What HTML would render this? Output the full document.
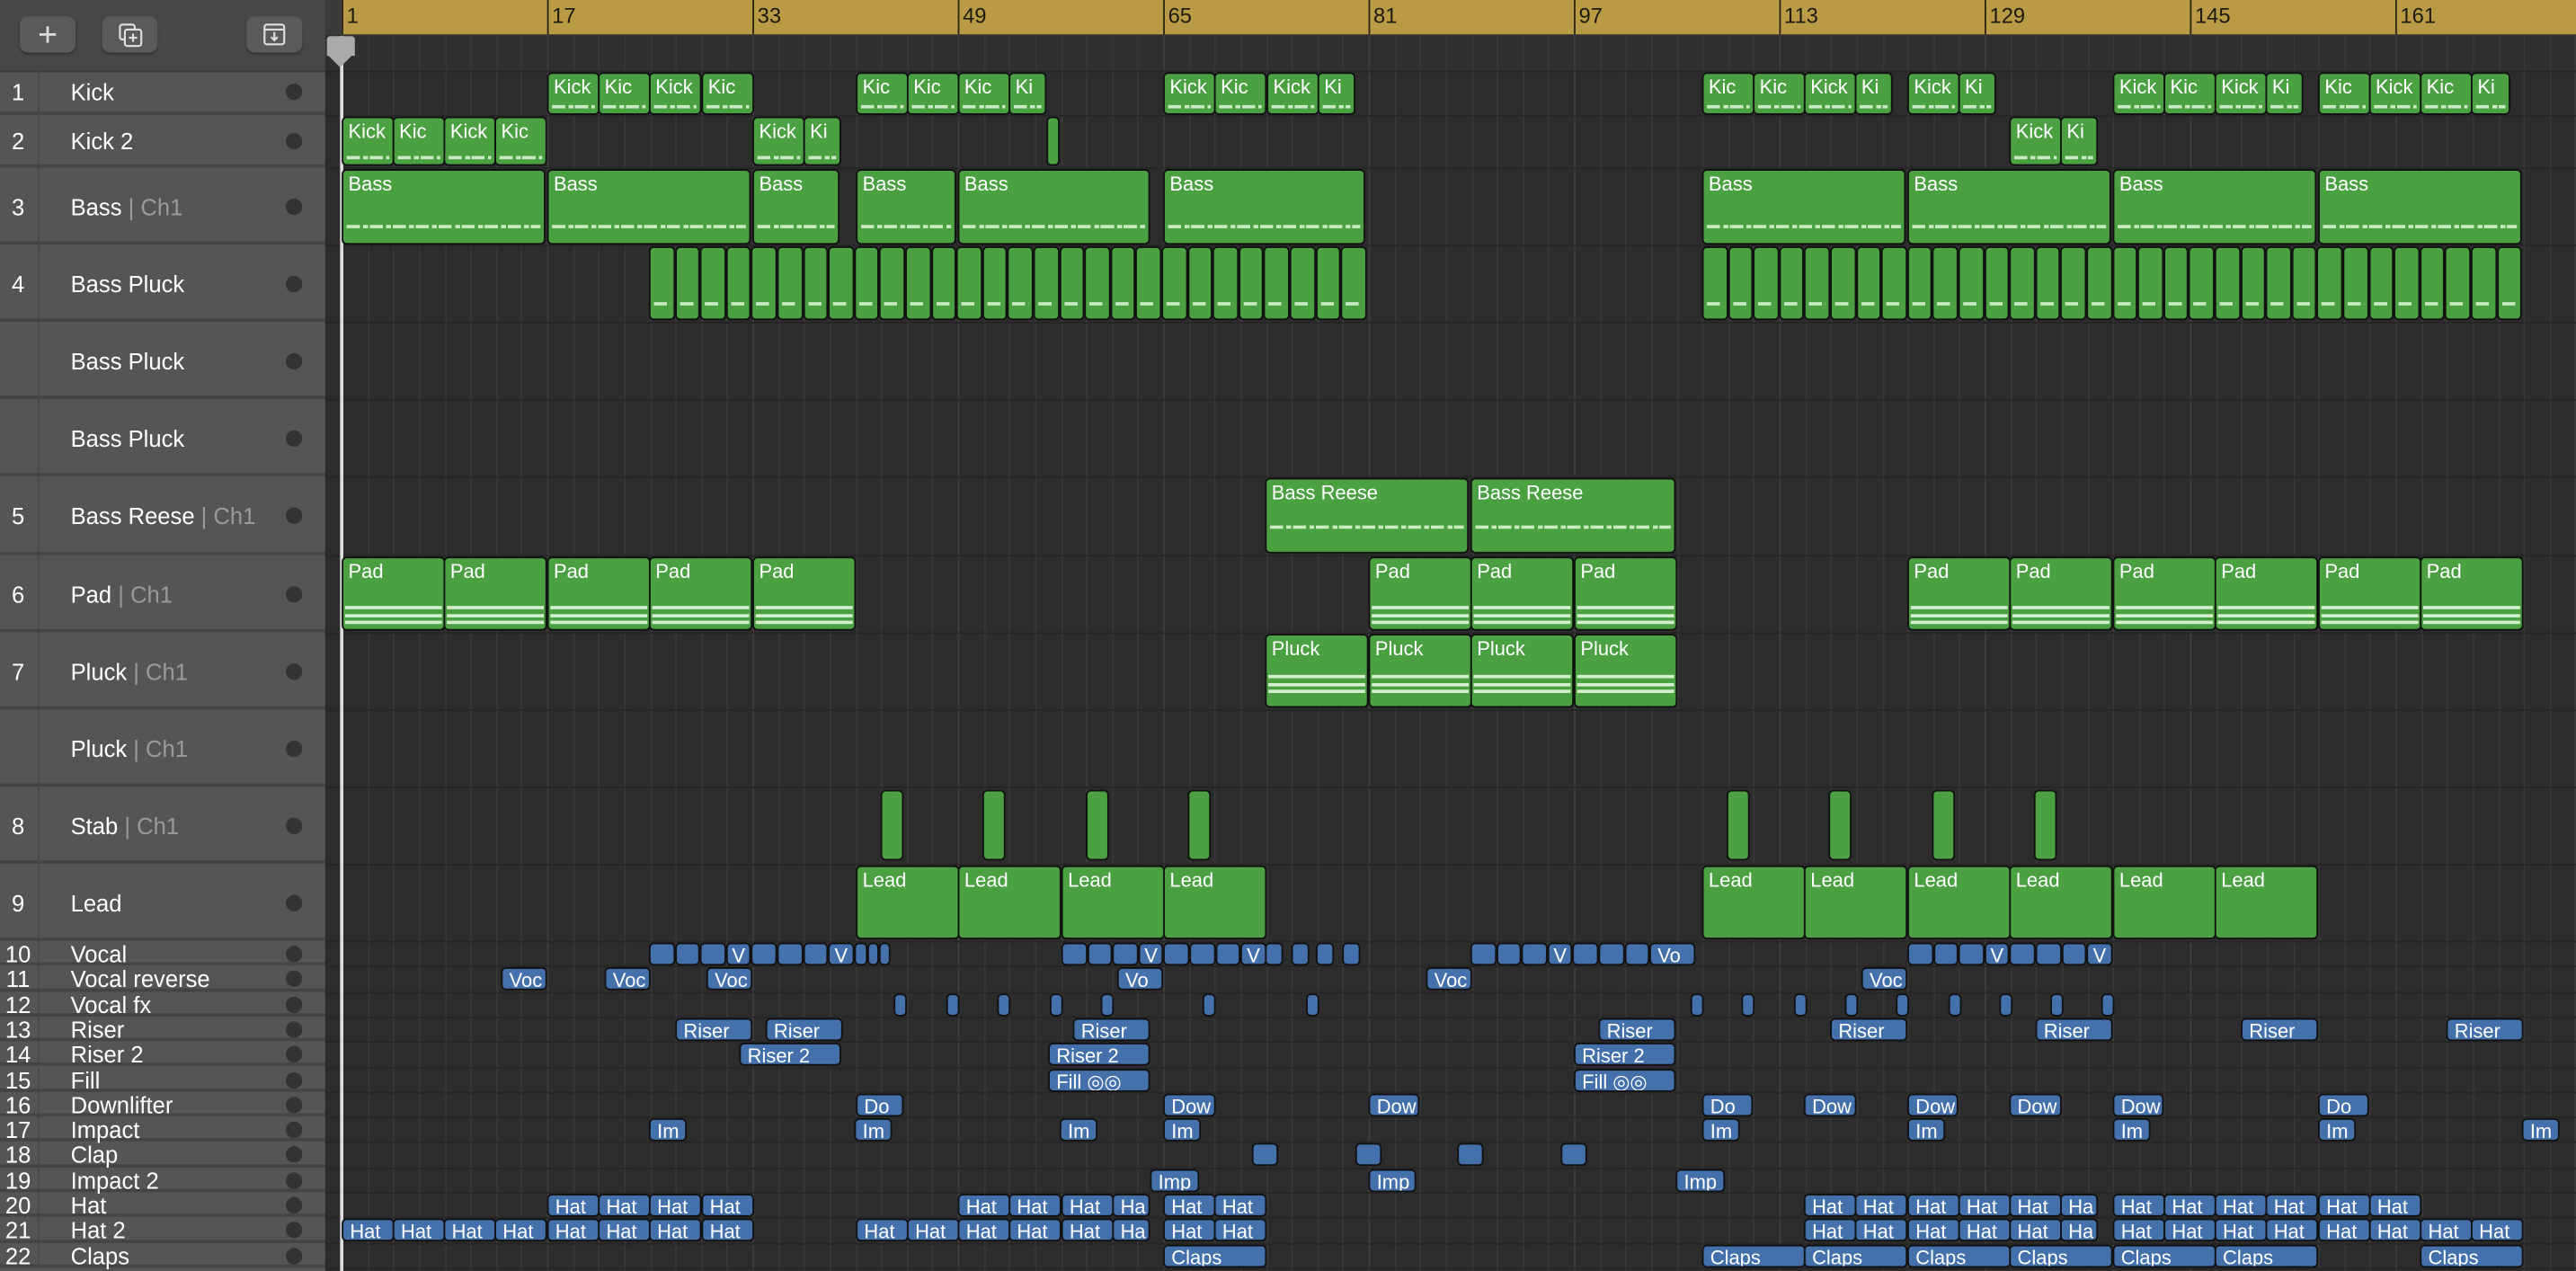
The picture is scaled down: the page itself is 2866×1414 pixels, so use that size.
<!DOCTYPE html>
<html><head><meta charset="utf-8">
<style>
html,body{margin:0;padding:0;background:#2c2c2c;overflow:hidden}
body{width:2866px;height:1414px}
#s{position:absolute;left:0;top:0;width:1568px;height:774px;transform-origin:0 0;transform:scale(1.82781,1.82687);font-family:"Liberation Sans",sans-serif;background:#2c2c2c;overflow:hidden}
#list{position:absolute;left:0;top:0;width:198px;height:774px;background:#555}
#hdr{position:absolute;left:0;top:0;width:198px;height:43px;background:#474747;border-bottom:1px solid #3a3a3a}
.btn{position:absolute;top:10px;height:22px;background:#5a5a5a;border-radius:5px;box-shadow:0 1px 1px #333}
.row{position:absolute;left:0;width:198px;border-bottom:2px solid #444;box-sizing:border-box;color:#fff}
.row .n{position:absolute;left:0;width:22px;text-align:center;font-size:14px}
.row .nm{position:absolute;left:43px;font-size:14px;white-space:nowrap}
.row .d{position:absolute;left:174px;width:10px;height:10px;border-radius:50%;background:#333}
.row .sep{position:absolute;left:23px;top:0;bottom:0;width:1px;background:#484848}
.g{color:#9a9a9a}
#tl{position:absolute;left:198px;top:0;right:0;bottom:0;background:#2c2c2c}
.r{position:absolute;box-sizing:border-box;border:1px solid #111;border-radius:3px;color:#fff;font-size:12px;line-height:13px;padding:2px 0 0 3px;overflow:hidden;white-space:nowrap}
.gr{background:#4ba142}
.bl{background:#4470ab;padding:1px 0 0 4px;font-size:12px}
.ln{position:absolute;left:2px;right:2px;height:2px;background:repeating-linear-gradient(90deg,#c8ebc2 0 8px,transparent 8px 10px,#c8ebc2 10px 13px,transparent 13px 14px)}
.sl{position:absolute;left:1px;right:1px;height:2px;background:#d4f0cf}
</style></head><body>
<div id="s">
<div id="tl"></div>
<div id="list">
<div id="hdr">
<div class="btn" style="left:12px;width:34px"><svg width="34" height="22"><path d="M17 6v10M12 11h10" stroke="#ddd" stroke-width="1.5"/></svg></div>
<div class="btn" style="left:62px;width:34px"><svg width="34" height="22"><rect x="11" y="5" width="9" height="9" rx="1.5" fill="none" stroke="#ddd" stroke-width="1.2"/><rect x="14" y="8" width="10" height="10" rx="1.5" fill="#5a5a5a" stroke="#ddd" stroke-width="1.2"/><path d="M19 10.5v5M16.5 13h5" stroke="#ddd" stroke-width="1.2"/></svg></div>
<div class="btn" style="left:150px;width:34px"><svg width="34" height="22"><rect x="11" y="5" width="12" height="12" rx="1.5" fill="none" stroke="#ddd" stroke-width="1.2"/><path d="M11 8h12M17 9.5v5M15 12.5l2 2 2-2" fill="none" stroke="#ddd" stroke-width="1.2"/></svg></div>
</div>
<div class="row" style="top:43px;height:27px"><span class="sep"></span><span class="n" style="top:5px">1</span><span class="nm" style="top:5px">Kick</span><span class="d" style="top:8px"></span></div>
<div class="row" style="top:70px;height:32px"><span class="sep"></span><span class="n" style="top:8px">2</span><span class="nm" style="top:8px">Kick 2</span><span class="d" style="top:11px"></span></div>
<div class="row" style="top:102px;height:47px"><span class="sep"></span><span class="n" style="top:16px">3</span><span class="nm" style="top:16px">Bass <span class="g">| Ch1</span></span><span class="d" style="top:19px"></span></div>
<div class="row" style="top:149px;height:47px"><span class="sep"></span><span class="n" style="top:16px">4</span><span class="nm" style="top:16px">Bass Pluck</span><span class="d" style="top:19px"></span></div>
<div class="row" style="top:196px;height:47px"><span class="sep"></span><span class="nm" style="top:16px">Bass Pluck</span><span class="d" style="top:19px"></span></div>
<div class="row" style="top:243px;height:47px"><span class="sep"></span><span class="nm" style="top:16px">Bass Pluck</span><span class="d" style="top:19px"></span></div>
<div class="row" style="top:290px;height:48px"><span class="sep"></span><span class="n" style="top:16px">5</span><span class="nm" style="top:16px">Bass Reese <span class="g">| Ch1</span></span><span class="d" style="top:19px"></span></div>
<div class="row" style="top:338px;height:47px"><span class="sep"></span><span class="n" style="top:16px">6</span><span class="nm" style="top:16px">Pad <span class="g">| Ch1</span></span><span class="d" style="top:19px"></span></div>
<div class="row" style="top:385px;height:47px"><span class="sep"></span><span class="n" style="top:16px">7</span><span class="nm" style="top:16px">Pluck <span class="g">| Ch1</span></span><span class="d" style="top:19px"></span></div>
<div class="row" style="top:432px;height:47px"><span class="sep"></span><span class="nm" style="top:16px">Pluck <span class="g">| Ch1</span></span><span class="d" style="top:19px"></span></div>
<div class="row" style="top:479px;height:47px"><span class="sep"></span><span class="n" style="top:16px">8</span><span class="nm" style="top:16px">Stab <span class="g">| Ch1</span></span><span class="d" style="top:19px"></span></div>
<div class="row" style="top:526px;height:47px"><span class="sep"></span><span class="n" style="top:16px">9</span><span class="nm" style="top:16px">Lead</span><span class="d" style="top:19px"></span></div>
<div class="row" style="top:573.0px;height:15.3px"><span class="sep"></span><span class="n" style="top:0px">10</span><span class="nm" style="top:0px">Vocal</span><span class="d" style="top:3px"></span></div>
<div class="row" style="top:588.3px;height:15.3px"><span class="sep"></span><span class="n" style="top:0px">11</span><span class="nm" style="top:0px">Vocal reverse</span><span class="d" style="top:3px"></span></div>
<div class="row" style="top:603.6px;height:15.3px"><span class="sep"></span><span class="n" style="top:0px">12</span><span class="nm" style="top:0px">Vocal fx</span><span class="d" style="top:3px"></span></div>
<div class="row" style="top:618.9px;height:15.3px"><span class="sep"></span><span class="n" style="top:0px">13</span><span class="nm" style="top:0px">Riser</span><span class="d" style="top:3px"></span></div>
<div class="row" style="top:634.2px;height:15.3px"><span class="sep"></span><span class="n" style="top:0px">14</span><span class="nm" style="top:0px">Riser 2</span><span class="d" style="top:3px"></span></div>
<div class="row" style="top:649.5px;height:15.3px"><span class="sep"></span><span class="n" style="top:0px">15</span><span class="nm" style="top:0px">Fill</span><span class="d" style="top:3px"></span></div>
<div class="row" style="top:664.8px;height:15.3px"><span class="sep"></span><span class="n" style="top:0px">16</span><span class="nm" style="top:0px">Downlifter</span><span class="d" style="top:3px"></span></div>
<div class="row" style="top:680.1px;height:15.3px"><span class="sep"></span><span class="n" style="top:0px">17</span><span class="nm" style="top:0px">Impact</span><span class="d" style="top:3px"></span></div>
<div class="row" style="top:695.4px;height:15.3px"><span class="sep"></span><span class="n" style="top:0px">18</span><span class="nm" style="top:0px">Clap</span><span class="d" style="top:3px"></span></div>
<div class="row" style="top:710.7px;height:15.3px"><span class="sep"></span><span class="n" style="top:0px">19</span><span class="nm" style="top:0px">Impact 2</span><span class="d" style="top:3px"></span></div>
<div class="row" style="top:726.0px;height:15.3px"><span class="sep"></span><span class="n" style="top:0px">20</span><span class="nm" style="top:0px">Hat</span><span class="d" style="top:3px"></span></div>
<div class="row" style="top:741.3px;height:15.3px"><span class="sep"></span><span class="n" style="top:0px">21</span><span class="nm" style="top:0px">Hat 2</span><span class="d" style="top:3px"></span></div>
<div class="row" style="top:756.6px;height:15.3px"><span class="sep"></span><span class="n" style="top:0px">22</span><span class="nm" style="top:0px">Claps</span><span class="d" style="top:3px"></span></div>
</div>
</div>
<script>
var S=document.getElementById('s');
function el(css,cls,txt){var d=document.createElement('div');d.style.cssText='position:absolute;'+css;if(cls)d.className=cls;if(txt)d.textContent=txt;S.appendChild(d);return d;}
el('left:200px;top:0;width:1368px;height:21px;background:#b99b46');
el('left:198px;top:0;width:10px;height:21px;background:#3a3a3a');
el('left:198px;top:21px;width:1370px;height:22px;background:#2f2f2f;border-bottom:1px solid #232323');
for(var b=1;b<=180;b+=2){var x=208+(b-1)*7.8125;if(x>1568)break;el('left:'+x+'px;top:21px;width:1px;height:753px;background:'+((b-1)%16==0?'#3e3e3e':'#383838'));}
for(var b=1;b<=180;b+=16){var x=208+(b-1)*7.8125;if(x>1568)break;el('left:'+x+'px;top:0;width:1px;height:21px;background:#2a2410');el('left:'+(x+3)+'px;top:2px;font-size:13px;color:#1e1a0e;line-height:16px','',String(b));}
var rows=[43,70,102,149,196,243,290,338,385,432,479,526];for(var i=0;i<=13;i++)rows.push(573+i*15.3);
rows.forEach(function(y){el('left:198px;top:'+y+'px;width:1370px;height:1px;background:#262626');});
el('left:207px;top:22px;width:2px;height:752px;background:#ddd');
el('left:199px;top:22px;width:17px;height:12px;background:#aaa;border-radius:2px 2px 0 0');
el('left:199px;top:33px;width:0;height:0;border-left:8.5px solid transparent;border-right:8.5px solid transparent;border-top:8px solid #aaa');
function G(x,y,w,h,t,lines,solid){var d=el('left:'+x+'px;top:'+y+'px;width:'+w+'px;height:'+h+'px','r gr',t||'');
 (lines||[]).forEach(function(ly){var l=document.createElement('div');l.className=solid?'sl':'ln';l.style.top=ly+'px';d.appendChild(l);});return d;}
function B(x,y,w,t){var d=el('left:'+x+'px;top:'+(y+1)+'px;width:'+w+'px;height:14px','r bl',t||'');if(w<20)d.style.paddingLeft='0';return d;}
function seq(arr,y,h,lines,w){arr.forEach(function(a){G(a[0],y,(a[2]||w)+0.5,h,a[1],lines);});}
var k=[[333,'Kick'],[364,'Kic'],[395,'Kick'],[427,'Kic'],[521,'Kic'],[552,'Kic'],[583,'Kic'],[614,'Ki',22],[708,'Kick'],[739,'Kic'],[771,'Kick'],[802,'Ki',22],[1036,'Kic'],[1067,'Kic'],[1098,'Kick'],[1129,'Ki',22],[1161,'Kick'],[1192,'Ki',22],[1286,'Kick'],[1317,'Kic'],[1348,'Kick'],[1379,'Ki',22],[1411,'Kic'],[1442,'Kick'],[1473,'Kic'],[1504,'Ki',23]];
seq(k,44,26,[19],31);
seq([[208,'Kick'],[239,'Kic'],[270,'Kick'],[301,'Kic'],[458,'Kick'],[489,'Ki',22],[1223,'Kick'],[1254,'Ki',22]],71,30,[23],31);
G(637,71,8,30,'');
[[208,124],[333,124],[458,53],[521,61],[583,117],[708,123],[1036,124],[1161,124],[1286,124],[1411,124]].forEach(function(a){G(a[0],103,a[1],46,'Bass',[33]);});
for(var x=395;x<830;x+=15.6)G(x,150,15.6,45,'',[33]);
for(var x=1036;x<1534;x+=15.6)G(x,150,15.6,45,'',[33]);
G(770,291,124,46,'Bass Reese',[28]);G(895,291,125,46,'Bass Reese',[28]);
[208,270,333,395,458,833,895,958,1161,1223,1286,1348,1411,1473].forEach(function(x){G(x,339,62.5,45,'Pad',[29,34,38],true);});
[770,833,895,958].forEach(function(x){G(x,386,62.5,45,'Pluck',[24,29,33],true);});
[536,598,661,723,1051,1113,1176,1238].forEach(function(x){G(x,481,14,43,'',[]).style.padding='0';});
[521,583,646,708,1036,1098,1161,1223,1286,1348].forEach(function(x){G(x,527,62.5,45,'Lead',[]);});
function Y(i){return 573+i*15.3;}
var v=[];
[395,410.6,426.2,441.8,457.4,473,488.6,504.2].forEach(function(x,i){v.push([x,15.6,(i==3||i==7)?'V':'']);});
v.push([520,8,''],[528,7,''],[535,7,'']);
[646,661.6,677.2,692.8,708.4,724,739.6,755.2].forEach(function(x,i){v.push([x,15.6,(i==3||i==7)?'V':'']);});
v.push([770,11,''],[786,11,''],[801,11,''],[817,11,'']);
[895,910.6,926.2,941.8,957.4,973,988.6].forEach(function(x,i){v.push([x,15.6,i==3?'V':'']);});
v.push([1004,28,'Vo']);
[1161,1176.6,1192.2,1207.8,1223.4,1239,1254.6,1270.2].forEach(function(x,i){v.push([x,15.6,(i==3||i==7)?'V':'']);});
v.forEach(function(a){var d=B(a[0],Y(0),a[1],a[2]);if(a[2]=='V'){d.style.paddingLeft='0';d.style.textAlign='center';}});
[[305,'Voc'],[368,'Voc'],[430,'Voc'],[680,'Vo'],[868,'Voc'],[1133,'Voc']].forEach(function(a){B(a[0],Y(1),28,a[1]);});
[544,576,607,639,670,732,795,1029,1060,1092,1123,1154,1186,1217,1248,1279].forEach(function(x){B(x,Y(2),8,'');});
[411,466,653,973,1114,1239,1364,1489].forEach(function(x){B(x,Y(3),47,'Riser');});
[450,638,958].forEach(function(x){B(x,Y(4),62,'Riser 2');});
[638,958].forEach(function(x){B(x,Y(5),62,'Fill ◎◎');});
[[521,29,'Do'],[708,32,'Dow'],[833,31,'Dow'],[1036,31,'Do'],[1098,32,'Dow'],[1161,31,'Dow'],[1223,32,'Dow'],[1286,31,'Dow'],[1411,31,'Do']].forEach(function(a){B(a[0],Y(6),a[1],a[2]);});
[395,520,645,708,1036,1161,1286,1411,1535].forEach(function(x){B(x,Y(7),23,'Im');});
[762,825,887,950].forEach(function(x){B(x,Y(8),16,'');});
[[700,30],[833,29],[1020,30]].forEach(function(a){B(a[0],Y(9),a[1],'Imp');});
[333,364,395,427,583,614,646,708,739,1098,1129,1161,1192,1223,1286,1317,1348,1379,1411,1442].forEach(function(x){B(x,Y(10),31.5,'Hat');});
[677,1254].forEach(function(x){B(x,Y(10),23,'Ha');});
[208,239,270,301,333,364,395,427,521,552,583,614,646,708,739,1098,1129,1161,1192,1223,1286,1317,1348,1379,1411,1442,1473,1504].forEach(function(x){B(x,Y(11),31.5,'Hat');});
[677,1254].forEach(function(x){B(x,Y(11),23,'Ha');});
[708,1036,1098,1161,1223,1286,1348,1473].forEach(function(x){B(x,Y(12),62.5,'Claps');});
</script>
</body></html>
